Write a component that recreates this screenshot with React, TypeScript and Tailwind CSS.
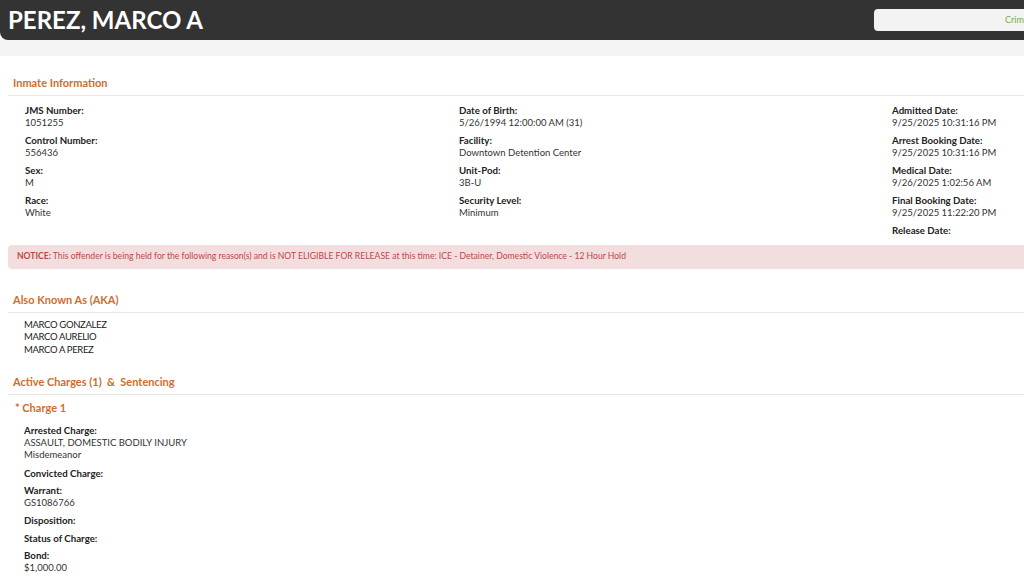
import React from 'react';

type Field = { label: string; value?: string[] };

const columns: Field[][] = [
  [
    { label: 'JMS Number:', value: ['1051255'] },
    { label: 'Control Number:', value: ['556436'] },
    { label: 'Sex:', value: ['M'] },
    { label: 'Race:', value: ['White'] },
  ],
  [
    { label: 'Date of Birth:', value: ['5/26/1994 12:00:00 AM (31)'] },
    { label: 'Facility:', value: ['Downtown Detention Center'] },
    { label: 'Unit-Pod:', value: ['3B-U'] },
    { label: 'Security Level:', value: ['Minimum'] },
  ],
  [
    { label: 'Admitted Date:', value: ['9/25/2025 10:31:16 PM'] },
    { label: 'Arrest Booking Date:', value: ['9/25/2025 10:31:16 PM'] },
    { label: 'Medical Date:', value: ['9/26/2025 1:02:56 AM'] },
    { label: 'Final Booking Date:', value: ['9/25/2025 11:22:20 PM'] },
    { label: 'Release Date:' },
  ],
];

const chargeFields: Field[] = [
  { label: 'Arrested Charge:', value: ['ASSAULT, DOMESTIC BODILY INJURY', 'Misdemeanor'] },
  { label: 'Convicted Charge:' },
  { label: 'Warrant:', value: ['GS1086766'] },
  { label: 'Disposition:' },
  { label: 'Status of Charge:' },
  { label: 'Bond:', value: ['$1,000.00'] },
];

const aliases = ['MARCO GONZALEZ', 'MARCO AURELIO', 'MARCO A PEREZ'];

function FieldBlock({ field }: { field: Field }) {
  return (
    <div className="mb-[5px] text-[9.5px] leading-[12.5px]">
      <div className="text-[9.7px] font-bold text-[#222]">{field.label}</div>
      {field.value?.map((v) => (
        <div key={v} className="text-[#333]">
          {v}
        </div>
      ))}
    </div>
  );
}

function SectionHeading({ children, className = '' }: { children: React.ReactNode; className?: string }) {
  return (
    <div
      className={`border-b border-[#e6e6e6] pb-[5px] pl-[5px] text-[11px] font-bold leading-[14px] text-[#cf6d2b] ${className}`}
    >
      {children}
    </div>
  );
}

export default function App() {
  return (
    <div
      className="h-[588px] w-screen overflow-hidden bg-white"
      style={{ fontFamily: 'Lato, "Open Sans", sans-serif' }}
    >
      <div className="w-[1320px]">
        <header className="flex h-10 items-center justify-between rounded-bl-lg bg-[#333333]">
          <h1 className="pb-[1px] pl-2 text-[24px] font-bold leading-none text-white">PEREZ, MARCO A</h1>
          <div className="mr-[146px] flex h-[22px] w-[300px] items-center rounded bg-[#f3f3f3] pl-[131px] text-[9px] text-[#7aab4f]">
            Criminal History
          </div>
        </header>
        <div className="h-4 bg-[#f4f4f4]" />

        <main className="pl-2">
          <SectionHeading className="mt-5">Inmate Information</SectionHeading>
          <div className="grid grid-cols-[434px_433px_434px] pl-[17px] pt-[8px]">
            {columns.map((col, i) => (
              <div key={i}>
                {col.map((f) => (
                  <FieldBlock key={f.label} field={f} />
                ))}
              </div>
            ))}
          </div>

          <div className="mt-[3px] flex h-6 items-center rounded-sm bg-[#f2dede] px-[9px] text-[8.6px] text-[#b94a48]">
            <span className="font-bold">NOTICE:</span>
            <span>
              &nbsp;This offender is being held for the following reason(s) and is NOT ELIGIBLE FOR RELEASE at
              this time: ICE - Detainer, Domestic Violence - 12 Hour Hold
            </span>
          </div>

          <SectionHeading className="mt-6">Also Known As (AKA)</SectionHeading>
          <div className="pl-4 pt-[6px] text-[9.5px] leading-[12.5px] tracking-[-0.35px] text-[#222]">
            {aliases.map((a) => (
              <div key={a}>{a}</div>
            ))}
          </div>

          <SectionHeading className="mt-[19px]">
            Active Charges (1)&nbsp;&nbsp;&amp;&nbsp;&nbsp;Sentencing
          </SectionHeading>
          <div className="pl-[7px] pt-[6px] text-[11px] font-bold leading-[14px] text-[#cf6d2b]">* Charge 1</div>
          <div className="pl-4 pt-[9px]">
            {chargeFields.map((f) => (
              <FieldBlock key={f.label} field={f} />
            ))}
          </div>
        </main>
      </div>
    </div>
  );
}
